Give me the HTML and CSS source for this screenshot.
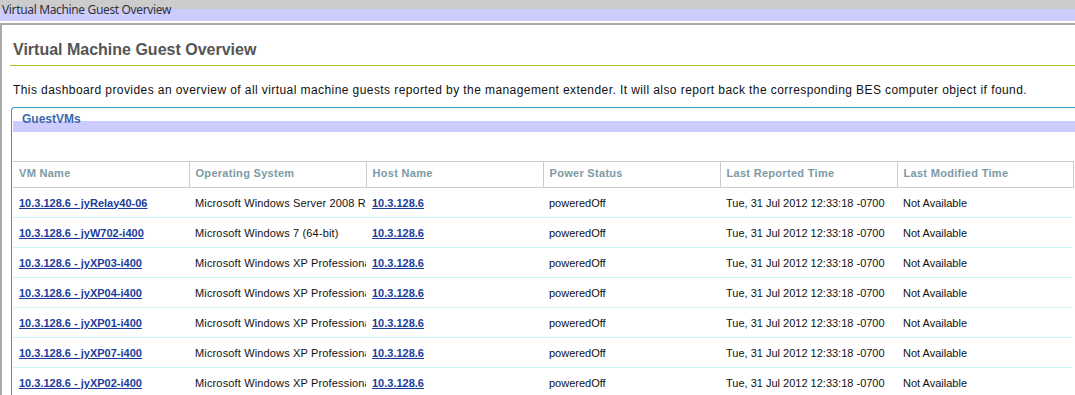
FILE: index.html
```html
<!DOCTYPE html>
<html>
<head>
<meta charset="utf-8">
<title>Virtual Machine Guest Overview</title>
<link rel="stylesheet" href="styles.css">
</head>
<body>
<div class="topbar"><span class="topbar-title">Virtual Machine Guest Overview</span></div>
<div class="frame">
  <div class="heading"><h1 class="heading-text">Virtual Machine Guest Overview</h1></div>
  <p class="desc">This dashboard provides an overview of all virtual machine guests reported by the management extender. It will also report back the corresponding BES computer object if found.</p>
  <div class="panel">
    <div class="panel-head"><span class="panel-title">GuestVMs</span></div>
    <table class="grid">
      <colgroup>
        <col class="c1"><col class="c2"><col class="c3"><col class="c4"><col class="c5"><col class="c6">
      </colgroup>
      <thead>
        <tr>
          <th><div class="cell">VM Name</div></th>
          <th><div class="cell">Operating System</div></th>
          <th><div class="cell">Host Name</div></th>
          <th><div class="cell">Power Status</div></th>
          <th><div class="cell">Last Reported Time</div></th>
          <th><div class="cell">Last Modified Time</div></th>
        </tr>
      </thead>
      <tbody>
        <tr>
          <td><div class="cell"><a class="lnk" href="#">10.3.128.6 - jyRelay40-06</a></div></td>
          <td><div class="cell os">Microsoft Windows Server 2008 R2 (64-bit)</div></td>
          <td><div class="cell"><a class="lnk" href="#">10.3.128.6</a></div></td>
          <td><div class="cell">poweredOff</div></td>
          <td><div class="cell">Tue, 31 Jul 2012 12:33:18 -0700</div></td>
          <td><div class="cell">Not Available</div></td>
        </tr>
        <tr>
          <td><div class="cell"><a class="lnk" href="#">10.3.128.6 - jyW702-i400</a></div></td>
          <td><div class="cell os">Microsoft Windows 7 (64-bit)</div></td>
          <td><div class="cell"><a class="lnk" href="#">10.3.128.6</a></div></td>
          <td><div class="cell">poweredOff</div></td>
          <td><div class="cell">Tue, 31 Jul 2012 12:33:18 -0700</div></td>
          <td><div class="cell">Not Available</div></td>
        </tr>
        <tr>
          <td><div class="cell"><a class="lnk" href="#">10.3.128.6 - jyXP03-i400</a></div></td>
          <td><div class="cell os">Microsoft Windows XP Professional (32-bit)</div></td>
          <td><div class="cell"><a class="lnk" href="#">10.3.128.6</a></div></td>
          <td><div class="cell">poweredOff</div></td>
          <td><div class="cell">Tue, 31 Jul 2012 12:33:18 -0700</div></td>
          <td><div class="cell">Not Available</div></td>
        </tr>
        <tr>
          <td><div class="cell"><a class="lnk" href="#">10.3.128.6 - jyXP04-i400</a></div></td>
          <td><div class="cell os">Microsoft Windows XP Professional (32-bit)</div></td>
          <td><div class="cell"><a class="lnk" href="#">10.3.128.6</a></div></td>
          <td><div class="cell">poweredOff</div></td>
          <td><div class="cell">Tue, 31 Jul 2012 12:33:18 -0700</div></td>
          <td><div class="cell">Not Available</div></td>
        </tr>
        <tr>
          <td><div class="cell"><a class="lnk" href="#">10.3.128.6 - jyXP01-i400</a></div></td>
          <td><div class="cell os">Microsoft Windows XP Professional (32-bit)</div></td>
          <td><div class="cell"><a class="lnk" href="#">10.3.128.6</a></div></td>
          <td><div class="cell">poweredOff</div></td>
          <td><div class="cell">Tue, 31 Jul 2012 12:33:18 -0700</div></td>
          <td><div class="cell">Not Available</div></td>
        </tr>
        <tr>
          <td><div class="cell"><a class="lnk" href="#">10.3.128.6 - jyXP07-i400</a></div></td>
          <td><div class="cell os">Microsoft Windows XP Professional (32-bit)</div></td>
          <td><div class="cell"><a class="lnk" href="#">10.3.128.6</a></div></td>
          <td><div class="cell">poweredOff</div></td>
          <td><div class="cell">Tue, 31 Jul 2012 12:33:18 -0700</div></td>
          <td><div class="cell">Not Available</div></td>
        </tr>
        <tr>
          <td><div class="cell"><a class="lnk" href="#">10.3.128.6 - jyXP02-i400</a></div></td>
          <td><div class="cell os">Microsoft Windows XP Professional (32-bit)</div></td>
          <td><div class="cell"><a class="lnk" href="#">10.3.128.6</a></div></td>
          <td><div class="cell">poweredOff</div></td>
          <td><div class="cell">Tue, 31 Jul 2012 12:33:18 -0700</div></td>
          <td><div class="cell">Not Available</div></td>
        </tr>
      </tbody>
    </table>
  </div>
</div>
</body>
</html>
```
FILE: styles.css
```css
html, body {
  margin: 0;
  padding: 0;
  background: #ffffff;
  overflow: hidden;
}

body {
  font-family: "Liberation Sans", Arial, sans-serif;
  width: 1140px;
}

.topbar {
  height: 21px;
  background: linear-gradient(#cccccc 0, #cccccc 9px, #ccccff 9px, #ccccff 21px);
  padding-left: 2px;
  box-sizing: border-box;
}

.topbar-title {
  font-family: "Noto Sans", "Open Sans", sans-serif;
  font-size: 12px;
  line-height: 18px;
  color: #333333;
  letter-spacing: -0.35px;
}

.frame {
  margin-top: 2px;
  border-top: 2px solid #a8a8a8;
  border-left: 2px solid #a8a8a8;
}

.heading {
  margin-left: 8px;
  padding: 15px 0 5px 3px;
  border-bottom: 1px solid #a6c82e;
}

.heading-text {
  margin: 0;
  font-size: 16px;
  line-height: 20px;
  font-weight: bold;
  color: #555555;
}

.desc {
  margin: 16px 0 9px 11px;
  font-size: 12px;
  line-height: 16px;
  color: #111111;
  letter-spacing: 0.42px;
}

.panel {
  margin-left: 9px;
  border-top: 1px solid #3d95c8;
  border-left: 1px solid #3d95c8;
  border-top-left-radius: 4px;
  padding-left: 1px;
}

.panel-head {
  height: 24px;
  background: linear-gradient(transparent 0, transparent 13px, #ccccff 13px, #ccccff 24px);
  padding: 1px 0 0 9px;
  box-sizing: border-box;
}

.panel-title {
  font-size: 12px;
  line-height: 14px;
  font-weight: bold;
  color: #3a67b0;
}

.grid {
  margin-top: 29px;
  border-collapse: collapse;
  table-layout: fixed;
  width: 1060px;
  font-size: 11px;
}

.c1 { width: 176px; }
.c2 { width: 177px; }
.c3 { width: 177px; }
.c4 { width: 177px; }
.c5 { width: 177px; }
.c6 { width: 176px; }

.grid th {
  height: 25px;
  padding: 0;
  text-align: left;
  font-weight: bold;
  color: #7b9aa5;
  letter-spacing: 0.3px;
  border-top: 1px solid #cccccc;
  border-bottom: 1px solid #cccccc;
  border-right: 1px solid #cccccc;
  vertical-align: middle;
}

.grid th .cell {
  padding-bottom: 4px;
}

.grid td {
  height: 29px;
  padding: 0;
  color: #111111;
  border-bottom: 1px solid #c8f6f6;
  vertical-align: middle;
}

.cell {
  padding-left: 6px;
  white-space: nowrap;
  overflow: hidden;
}

.os {
  letter-spacing: 0.15px;
}

.lnk {
  color: #1c3c9c;
  font-weight: bold;
  text-decoration: underline;
}
```
